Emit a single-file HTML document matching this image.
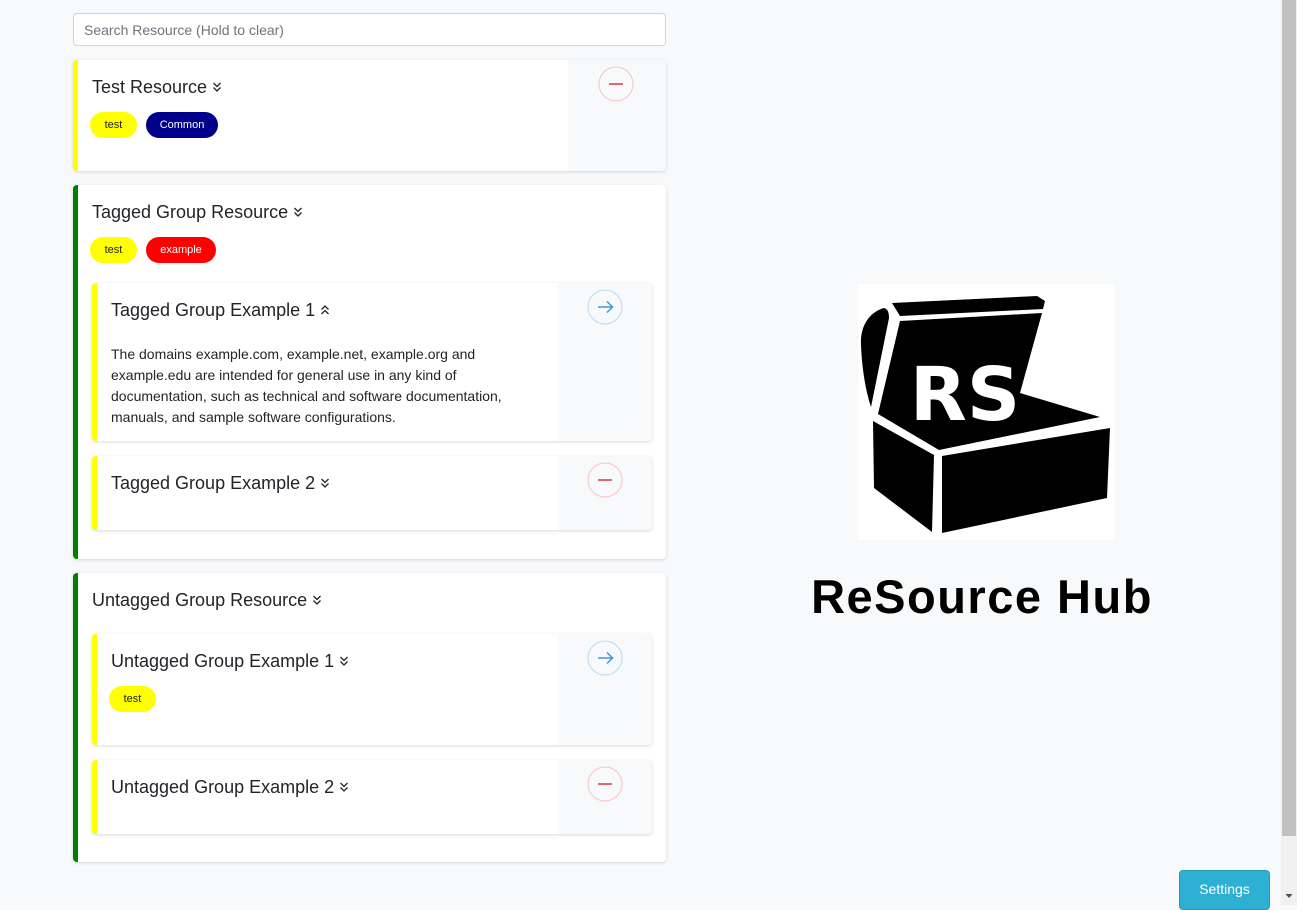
<!DOCTYPE html>
<html><head><meta charset="utf-8">
<style>
*{box-sizing:border-box;margin:0;padding:0}
html,body{width:1297px;height:905px;overflow:hidden;background:#f8f9fa;font-family:"Liberation Sans",Arial,sans-serif;color:#212529}
.a{position:absolute}
.search{left:73px;top:13px;width:593px;height:33px;border:1px solid #ced4da;border-radius:4px;background:#fff;font-size:14px;color:#6c757d;padding:8px 10px;line-height:16px}
.card{background:#fff;border-radius:4px;box-shadow:0 1px 3px rgba(0,0,0,.15);overflow:hidden}
.bl{position:absolute;left:0;top:0;bottom:0;width:5px}
.rp{position:absolute;top:0;bottom:0;right:0;background:#f8f9fa}
.t{position:absolute;font-size:18px;line-height:22px;white-space:nowrap}
.t svg{margin-left:0!important}
.tag{position:absolute;height:26px;border-radius:13px;font-size:11px;line-height:26px;text-align:center}
</style></head><body>
<div class="a search">Search Resource (Hold to clear)</div>

<div class="a card" style="left:73px;top:60px;width:593px;height:111px">
 <div class="bl" style="background:#ffff00"></div>
 <div class="rp" style="width:98px"></div>
 <div class="t" style="left:19px;top:16px">Test Resource <svg width="10" height="12" viewBox="0 0 10 12"><path d="M1.5 2l3.5 3.5 3.5-3.5M1.5 6.5l3.5 3.5 3.5-3.5" fill="none" stroke="#222" stroke-width="1.3"/></svg></div>
 <div class="tag" style="left:17px;top:52px;width:47px;background:#ffff00;color:#222">test</div>
 <div class="tag" style="left:73px;top:52px;width:72px;background:#00008b;color:#fff">Common</div>
 <svg class="a" style="left:525px;top:6px" width="36" height="36"><circle cx="18" cy="18" r="17" fill="none" stroke="#f5c2c7" stroke-width="1"/><path d="M11 18h14" stroke="#dc3545" stroke-width="1.5"/></svg>
</div>

<div class="a card" style="left:73px;top:185px;width:593px;height:374px">
 <div class="bl" style="background:#008000"></div>
 <div class="t" style="left:19px;top:16px">Tagged Group Resource <svg width="10" height="12" viewBox="0 0 10 12"><path d="M1.5 2l3.5 3.5 3.5-3.5M1.5 6.5l3.5 3.5 3.5-3.5" fill="none" stroke="#222" stroke-width="1.3"/></svg></div>
 <div class="tag" style="left:17px;top:52px;width:47px;background:#ffff00;color:#222">test</div>
 <div class="tag" style="left:73px;top:52px;width:70px;background:#ff0000;color:#fff">example</div>
</div>
<div class="a card" style="left:92px;top:283px;width:560px;height:158px">
 <div class="bl" style="background:#ffff00"></div>
 <div class="rp" style="width:94px"></div>
 <div class="t" style="left:19px;top:16px">Tagged Group Example 1 <svg width="10" height="12" viewBox="0 0 10 12"><path d="M1.5 5.5l3.5-3.5 3.5 3.5M1.5 10l3.5-3.5 3.5 3.5" fill="none" stroke="#222" stroke-width="1.3"/></svg></div>
 <div class="a" style="left:19px;top:61px;width:420px;font-size:14px;line-height:21px">The domains example.com, example.net, example.org and example.edu are intended for general use in any kind of documentation, such as technical and software documentation, manuals, and sample software configurations.</div>
 <svg class="a" style="left:495px;top:6px" width="36" height="36"><circle cx="18" cy="18" r="17" fill="none" stroke="#b6dcf2" stroke-width="1"/><path d="M11 18h14M20 12.5l5.5 5.5-5.5 5.5" fill="none" stroke="#3a9ad9" stroke-width="1.5"/></svg>
</div>
<div class="a card" style="left:92px;top:456px;width:560px;height:74px">
 <div class="bl" style="background:#ffff00"></div>
 <div class="rp" style="width:94px"></div>
 <div class="t" style="left:19px;top:16px">Tagged Group Example 2 <svg width="10" height="12" viewBox="0 0 10 12"><path d="M1.5 2l3.5 3.5 3.5-3.5M1.5 6.5l3.5 3.5 3.5-3.5" fill="none" stroke="#222" stroke-width="1.3"/></svg></div>
 <svg class="a" style="left:495px;top:6px" width="36" height="36"><circle cx="18" cy="18" r="17" fill="none" stroke="#f5c2c7" stroke-width="1"/><path d="M11 18h14" stroke="#dc3545" stroke-width="1.5"/></svg>
</div>

<div class="a card" style="left:73px;top:573px;width:593px;height:289px">
 <div class="bl" style="background:#008000"></div>
 <div class="t" style="left:19px;top:16px">Untagged Group Resource <svg width="10" height="12" viewBox="0 0 10 12"><path d="M1.5 2l3.5 3.5 3.5-3.5M1.5 6.5l3.5 3.5 3.5-3.5" fill="none" stroke="#222" stroke-width="1.3"/></svg></div>
</div>
<div class="a card" style="left:92px;top:634px;width:560px;height:111px">
 <div class="bl" style="background:#ffff00"></div>
 <div class="rp" style="width:94px"></div>
 <div class="t" style="left:19px;top:16px">Untagged Group Example 1 <svg width="10" height="12" viewBox="0 0 10 12"><path d="M1.5 2l3.5 3.5 3.5-3.5M1.5 6.5l3.5 3.5 3.5-3.5" fill="none" stroke="#222" stroke-width="1.3"/></svg></div>
 <div class="tag" style="left:17px;top:52px;width:47px;background:#ffff00;color:#222">test</div>
 <svg class="a" style="left:495px;top:6px" width="36" height="36"><circle cx="18" cy="18" r="17" fill="none" stroke="#b6dcf2" stroke-width="1"/><path d="M11 18h14M20 12.5l5.5 5.5-5.5 5.5" fill="none" stroke="#3a9ad9" stroke-width="1.5"/></svg>
</div>
<div class="a card" style="left:92px;top:760px;width:560px;height:74px">
 <div class="bl" style="background:#ffff00"></div>
 <div class="rp" style="width:94px"></div>
 <div class="t" style="left:19px;top:16px">Untagged Group Example 2 <svg width="10" height="12" viewBox="0 0 10 12"><path d="M1.5 2l3.5 3.5 3.5-3.5M1.5 6.5l3.5 3.5 3.5-3.5" fill="none" stroke="#222" stroke-width="1.3"/></svg></div>
 <svg class="a" style="left:495px;top:6px" width="36" height="36"><circle cx="18" cy="18" r="17" fill="none" stroke="#f5c2c7" stroke-width="1"/><path d="M11 18h14" stroke="#dc3545" stroke-width="1.5"/></svg>
</div>

<svg class="a" style="left:858px;top:284px" width="256" height="256" viewBox="858 284 256 256">
 <rect x="858" y="284" width="256" height="256" fill="#fff"/>
 <path d="M892 303L1037 296L1045 301L1043 309L900 316Z" fill="#000"/>
 <path d="M884 308C870 312 860 325 861 345C862 370 866 392 871 407L889 318C889 313 888 309 884 308Z" fill="#000"/>
 <path d="M900 321L1042 313L1020 393L1100 417L939 450L878 414Z" fill="#000"/>
 <path d="M873 421L934 455L932 532L874 488Z" fill="#000"/>
 <path d="M942 456L1110 428L1107 498L942 533Z" fill="#000"/>
 <text x="965" y="420" text-anchor="middle" font-family="DejaVu Sans,sans-serif" font-weight="bold" font-size="74" fill="#fff">RS</text>
</svg>
<div class="a" style="left:780px;top:569px;width:404px;text-align:center;font-size:47px;font-weight:bold;letter-spacing:1.5px;color:#000;line-height:56px">ReSource Hub</div>

<div class="a" style="left:1179px;top:870px;width:91px;height:40px;background:#2eb0d5;border-radius:4px;border:1px solid #269abc;color:#fff;font-size:14px;text-align:center;line-height:36px">Settings</div>

<div class="a" style="left:1281px;top:0;width:16px;height:905px;background:#f1f1f1"></div>
<div class="a" style="left:1282px;top:0;width:14px;height:836px;background:#c1c1c1"></div>
<svg class="a" style="left:1281px;top:888px" width="16" height="17"><path d="M4.5 6h7l-3.5 4z" fill="#505050"/></svg>
</body></html>
